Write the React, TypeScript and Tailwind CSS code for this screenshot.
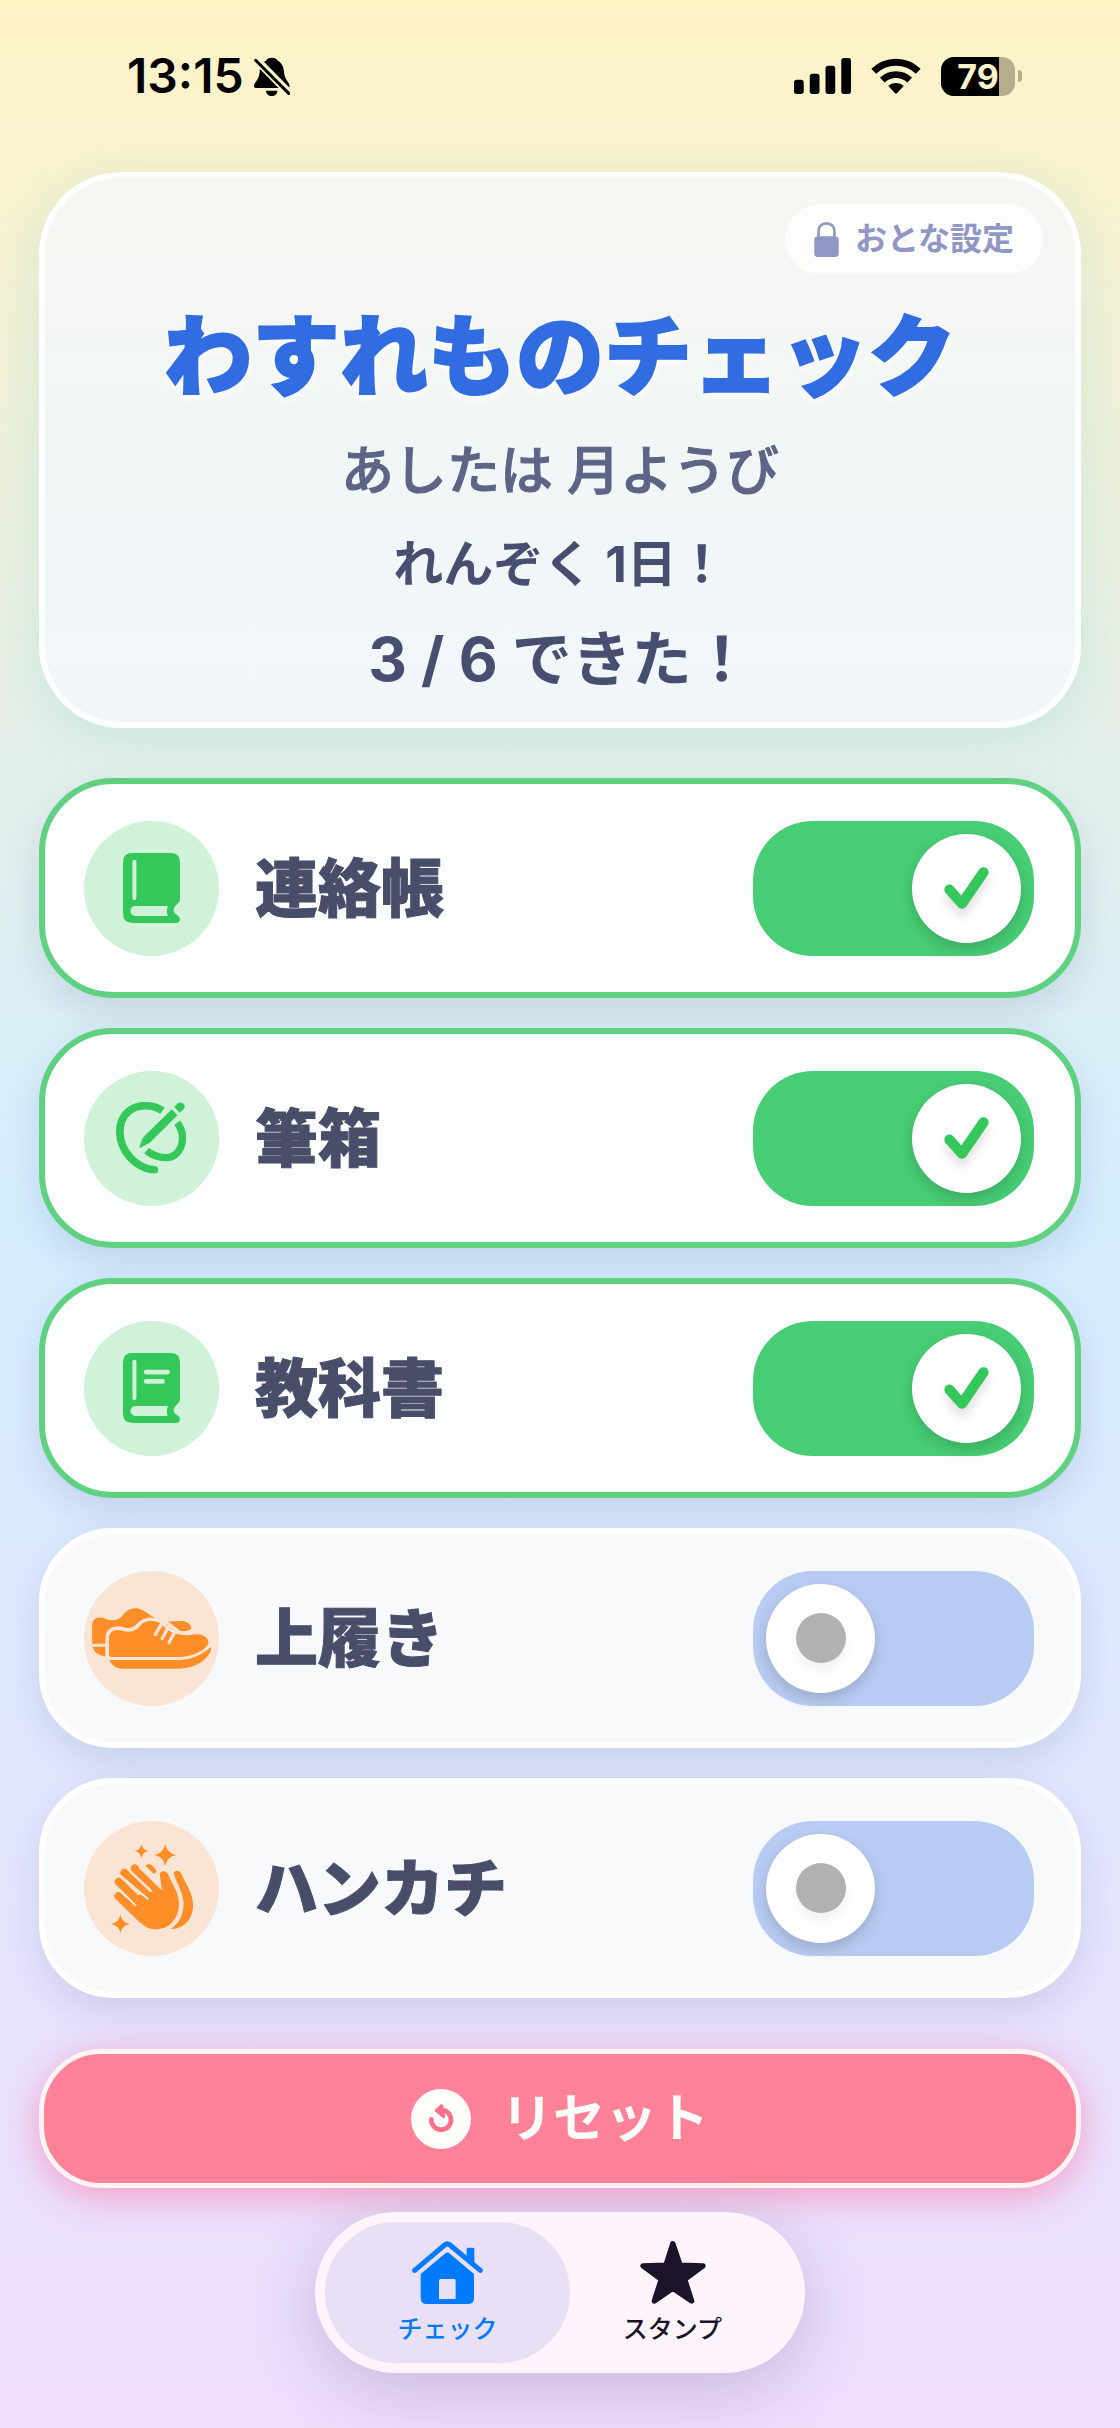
import { useState } from "react";
import type { ReactNode } from "react";

type Item = {
  id: string;
  name: string;
  icon: ReactNode;
  checked: boolean;
};

const TOTAL = 6;

function BellOffIcon() {
  return (
    <svg viewBox="0 0 112 118" className="h-[39px] w-[37px]" aria-hidden="true">
      <path
        d="M57 2C66 2 72 6 75 11C87 17 93 30 94 46C95 68 111 76 111 88C111 92 109 94 105 94H9C5 94 3 92 3 88C3 77 19 68 20 46C21 30 27 17 39 11C42 6 48 2 57 2Z"
        fill="black"
      />
      <path d="M39 102H74C73 112 66 118 57 118C47 118 40 112 39 102Z" fill="black" />
      <path d="M2 0L112 112" stroke="#FBF2C9" strokeWidth="24" />
      <path d="M8 10L108 110" stroke="black" strokeWidth="9" strokeLinecap="round" />
    </svg>
  );
}

function SignalIcon() {
  return (
    <svg viewBox="0 0 170 107" className="h-9 w-[57px]" aria-hidden="true">
      <rect x="0" y="65" width="29" height="42" rx="8" />
      <rect x="47" y="47" width="29" height="60" rx="8" />
      <rect x="94" y="23" width="29" height="84" rx="8" />
      <rect x="141" y="0" width="29" height="107" rx="8" />
    </svg>
  );
}

function WifiIcon() {
  return (
    <svg viewBox="0 0 149 109" fill="none" className="h-9 w-[50px]" aria-hidden="true">
      <path d="M7 40A97 97 0 0 1 142 40" stroke="black" strokeWidth="21" />
      <path d="M33 67A60 60 0 0 1 116 67" stroke="black" strokeWidth="20" />
      <path d="M51 85C63 73 86 73 98 85L78 106Q74.500 110 71 106Z" fill="black" />
    </svg>
  );
}

function Battery() {
  return (
    <div className="flex items-center gap-[3px]">
      <div className="relative h-[39px] w-[74px]">
        <div className="flex size-full overflow-hidden rounded-[13px] bg-[#B5AD8C]">
          <div className="w-[79%] bg-black" />
        </div>
        <span className="absolute inset-0 text-center text-[34px] leading-[39px] font-bold text-[#FBF3CB]">
          79
        </span>
      </div>
      <div className="h-3 w-1 rounded-r-full bg-[#B5AD8C]" />
    </div>
  );
}

function LockIcon() {
  return (
    <svg viewBox="0 0 74 106" fill="none" className="h-[35px] w-[25px]" aria-hidden="true">
      <path d="M13 50V29C13 13 23 4 37 4S61 13 61 29V50" stroke="#9097C4" strokeWidth="8" />
      <rect y="43" width="74" height="63" rx="11" fill="#9097C4" />
    </svg>
  );
}

function BookIcon({ lines = false }: { lines?: boolean }) {
  return (
    <svg viewBox="0 0 170 209" fill="none" className="h-[70px] w-[57px]" aria-hidden="true">
      <path
        d="M28 0H142Q170 0 170 28V140C170 150 151 156 151 172C151 183 170 187 170 198Q170 209 158 209H28Q0 209 0 181V28Q0 0 28 0Z"
        fill="#34C759"
      />
      <path d="M37 158H134C130 167 130 179 134 188H37A15 15 0 0 1 37 158Z" fill="#CFF2D8" />
      <path d="M34 26V134" stroke="#CFF2D8" strokeWidth="12" strokeLinecap="round" />
      {lines && (
        <path
          d="M69 57H133M69 85H118"
          stroke="#CFF2D8"
          strokeWidth="14"
          strokeLinecap="round"
        />
      )}
    </svg>
  );
}

function PencilLoopIcon() {
  return (
    <svg viewBox="0 0 212 216" fill="none" className="h-[72px] w-[71px]" aria-hidden="true">
      <path
        d="M139 26C124 16 106 11 87 11C40 11 11 45 11 89C11 146 57 196 110 203"
        stroke="#34C759"
        strokeWidth="23"
      />
      <circle cx="115" cy="203" r="11" fill="#34C759" />
      <path
        d="M183 62C193 75 199 92 199 108C199 145 175 167 150 167C128 167 108 160 91 146"
        stroke="#34C759"
        strokeWidth="22"
      />
      <path d="M142 36L162 16L194 48L174 68Z" fill="#CFF2D8" />
      <path
        d="M167 22L184 40L104 119Q100 123 94 126L73 137Q69 138 70 133L79 110Q81 105 85 102Z"
        fill="#34C759"
      />
      <path d="M174 15L185 4C196 -4 212 9 203 21L191 32Z" fill="#34C759" />
    </svg>
  );
}

function ShoesIcon() {
  return (
    <svg viewBox="0 0 362 184" fill="none" className="h-[61px] w-[121px]" aria-hidden="true">
      <path
        d="M2 108V50C3 32 22 25 38 31C58 39 78 40 92 25C106 6 122 -2 143 2C160 7 180 25 200 35L230 41L275 39C290 41 303 52 301 64L270 74L60 108Z"
        fill="#FF8D28"
      />
      <path d="M4 117H60V146H42C20 143 6 132 4 117Z" fill="#FF8D28" />
      <path
        d="M53 148V90C53 70 72 62 90 68C112 75 130 73 146 54C162 36 186 37 204 44L226 50L262 78C280 85 296 81 312 79C338 77 355 92 353 107C343 128 305 147 262 148Z"
        fill="#FF8D28"
        stroke="#FAE4D3"
        strokeWidth="22"
        strokeLinejoin="round"
        paintOrder="stroke"
      />
      <path d="M42 146H58V170H42Z" fill="#FAE4D3" />
      <path
        d="M54 157H268C306 157 342 134 361 118C362 145 324 181 268 183H92C70 182 59 170 54 157Z"
        fill="#FF8D28"
      />
      <path
        d="M212 47L192 80M232 58L213 92M252 70L234 104"
        stroke="#FAE4D3"
        strokeWidth="10"
        strokeLinecap="round"
      />
      <path d="M216 48C232 66 252 78 284 75" stroke="#FAE4D3" strokeWidth="9" strokeLinecap="round" />
    </svg>
  );
}

function HandsIcon() {
  return (
    <svg viewBox="0 0 245 266" fill="none" className="h-[89px] w-[82px]" aria-hidden="true">
      <g fill="#FF8D28">
        <path d="M91 0Q94 18 112 21Q94 24 91 42Q88 24 70 21Q88 18 91 0Z" />
        <path d="M162 0Q167 28 195 33Q167 38 162 66Q157 38 129 33Q157 28 162 0Z" />
        <path d="M28 211Q32 235 56 239Q32 243 28 267Q24 243 0 239Q24 235 28 211Z" />
        <path d="M103 66C108 59 120 59 126 67L135 78Q137 84 129 90Z" />
        <path d="M188 90C185 79 203 76 210 88C224 122 245 146 245 183C245 228 213 256 178 254C204 238 217 211 217 177C216 145 196 118 188 90Z" />
        <path d="M40 165L150 135L146 88C149 79 165 79 170 90C182 119 203 145 203 178C203 224 174 255 133 255C108 255 96 244 80 226L20 164Z" />
      </g>
      <path
        d="M22 156L92 224M23 113L105 193M40 86L130 174M71 73L150 150"
        stroke="#FF8D28"
        strokeWidth="24"
        strokeLinecap="round"
      />
      <path
        d="M28 138L73 183M32 98L110 164M57 82L116 135M86 70L150 133"
        stroke="#FAE4D3"
        strokeWidth="6"
        strokeLinecap="round"
      />
      <path d="M133 106L144 90L152 136Z" fill="#FAE4D3" />
    </svg>
  );
}

function CheckMark() {
  return (
    <svg
      viewBox="0 0 136 128"
      fill="none"
      className="h-[42px] w-[45px] drop-shadow-[0_8px_5px_rgba(0,0,0,0.12)]"
      aria-hidden="true"
    >
      <path
        d="M16 69L54 112L120 16"
        stroke="#34C759"
        strokeWidth="31"
        strokeLinecap="round"
        strokeLinejoin="round"
      />
    </svg>
  );
}

function ResetIcon() {
  return (
    <svg viewBox="0 0 180 180" fill="none" className="size-[60px]" aria-hidden="true">
      <circle cx="90" cy="90" r="90" fill="#FFFDFA" />
      <path
        d="M61 91A29.500 29.500 0 1 0 98 64"
        stroke="#FF6F8B"
        strokeWidth="14"
        strokeLinecap="round"
      />
      <path
        d="M92 50L76 65L98 83Z"
        fill="#FF6F8B"
        stroke="#FF6F8B"
        strokeWidth="9"
        strokeLinejoin="round"
      />
    </svg>
  );
}

function HouseIcon() {
  return (
    <svg viewBox="0 0 213 189" fill="none" className="h-[63px] w-[71px]" aria-hidden="true">
      <path d="M164 25Q164 20 169 20H182Q187 20 187 25V74L164 55Z" fill="#007AFF" />
      <path
        d="M8 88L98 12Q106 5 114 12L205 88"
        stroke="#007AFF"
        strokeWidth="15"
        strokeLinecap="round"
      />
      <path
        d="M26 99L100 37Q106 32 112 37L186 99V170Q186 189 167 189H45Q26 189 26 170ZM86 114Q81 114 81 119V174H131V119Q131 114 126 114Z"
        fill="#007AFF"
        fillRule="evenodd"
      />
    </svg>
  );
}

function StarIcon() {
  return (
    <svg viewBox="0 0 197 190" className="h-[63px] w-[66px]" aria-hidden="true">
      <path
        d="M98 8L120 73L189 75L134 116L155 181L98 143L42 181L63 116L8 75L77 73Z"
        fill="#1B1429"
        stroke="#1B1429"
        strokeWidth="16"
        strokeLinejoin="round"
      />
    </svg>
  );
}

const initialItems: Item[] = [
  { id: "renrakucho", name: "連絡帳", icon: <BookIcon />, checked: true },
  { id: "fudebako", name: "筆箱", icon: <PencilLoopIcon />, checked: true },
  { id: "kyokasho", name: "教科書", icon: <BookIcon lines />, checked: true },
  { id: "uwabaki", name: "上履き", icon: <ShoesIcon />, checked: false },
  { id: "hankachi", name: "ハンカチ", icon: <HandsIcon />, checked: false },
];

function StatusBar() {
  return (
    <div className="flex h-[152px] items-center justify-between pr-[98px] pl-[127px]">
      <div className="flex items-center gap-[9px]">
        <span className="text-[48px] leading-none font-semibold text-black">13:15</span>
        <BellOffIcon />
      </div>
      <div className="flex items-center gap-5">
        <SignalIcon />
        <WifiIcon />
        <Battery />
      </div>
    </div>
  );
}

function ItemRow({ item, onToggle }: { item: Item; onToggle: () => void }) {
  return (
    <li
      className={
        item.checked
          ? "flex h-[220px] items-center rounded-[74px] border-[6px] border-[#60D081] bg-[#FCFDFD] pr-[41px] pl-[39px] shadow-[0_14px_36px_rgba(60,70,110,0.14)]"
          : "flex h-[220px] items-center rounded-[74px] border-[6px] border-white bg-[#F8F9FB] pr-[41px] pl-[39px] shadow-[0_14px_36px_rgba(60,70,110,0.14)]"
      }
    >
      <div
        className={
          item.checked
            ? "flex size-[135px] shrink-0 items-center justify-center rounded-full bg-[#CFF2D8]"
            : "flex size-[135px] shrink-0 items-center justify-center rounded-full bg-[#FAE4D3]"
        }
      >
        {item.icon}
      </div>
      <label
        htmlFor={item.id}
        className="ml-9 grow text-[63px] leading-[76px] font-black text-[#484E6A] [-webkit-text-stroke:1px_#484E6A]"
      >
        {item.name}
      </label>
      <div className="relative">
        <input
          id={item.id}
          type="checkbox"
          checked={item.checked}
          onChange={onToggle}
          className="block h-[135px] w-[281px] cursor-pointer appearance-none rounded-[60px] bg-[#B8CBF2] checked:bg-[#47CD74]"
        />
        <div
          className={
            item.checked
              ? "pointer-events-none absolute top-[13px] right-[13px] flex size-[109px] items-center justify-center rounded-full bg-white shadow-[0_6px_14px_rgba(0,0,0,0.16)]"
              : "pointer-events-none absolute top-[13px] left-[13px] flex size-[109px] items-center justify-center rounded-full bg-white shadow-[0_6px_14px_rgba(0,0,0,0.16)]"
          }
        >
          {item.checked ? (
            <CheckMark />
          ) : (
            <span className="size-[50px] rounded-full bg-[#B1B1B3] shadow-[0_8px_12px_rgba(0,0,0,0.05)]" />
          )}
        </div>
      </div>
    </li>
  );
}

export default function App() {
  const [items, setItems] = useState(initialItems);
  const done = items.filter((item) => item.checked).length;

  const toggle = (id: string) =>
    setItems(items.map((item) => (item.id === id ? { ...item, checked: !item.checked } : item)));

  const reset = () => setItems(items.map((item) => ({ ...item, checked: false })));

  return (
    <div
      lang="ja"
      className="flex min-h-screen flex-col bg-linear-to-b from-[#FFF3C6] via-[#D4EEFF] to-[#F0DEFF] pb-[53px] font-['Inter','Noto_Sans_CJK_JP',sans-serif]"
    >
      <StatusBar />

      <main className="mx-[39px] mt-5">
        <header className="flex flex-col items-center rounded-[82px] border-[6px] border-white/90 bg-linear-to-b from-[#F6F7F1] via-[#F1F7F6] to-[#F1F6FB] bg-origin-border px-8 pt-[26px] pb-7 text-center shadow-[0_10px_50px_rgba(90,190,190,0.22)]">
          <button
            type="button"
            className="flex h-[70px] cursor-pointer items-center gap-4 self-end rounded-full bg-white/75 px-[29px] text-[32px] font-bold text-[#9097C4]"
          >
            <LockIcon />
            おとな設定
          </button>
          <h1 className="mt-8 text-[88px] leading-[100px] font-black text-[#316CE1] [text-shadow:0_4px_8px_white] [-webkit-text-stroke:2px_#316CE1]">
            わすれものチェック
          </h1>
          <p className="mt-8 text-[53px] leading-[66px] font-medium text-[#5D6485] [-webkit-text-stroke:1px_#5D6485]">
            あしたは 月ようび
          </p>
          <p className="mt-[30px] text-[50px] leading-[60px] font-bold text-[#474E6F]">
            れんぞく 1日！
          </p>
          <p className="mt-[30px] text-[60px] leading-[70px] font-bold text-[#474E6F]">
            {done} / {TOTAL} できた！
          </p>
        </header>

        <ul className="mt-[50px] flex flex-col gap-[30px]">
          {items.map((item) => (
            <ItemRow key={item.id} item={item} onToggle={() => toggle(item.id)} />
          ))}
        </ul>

        <button
          type="button"
          onClick={reset}
          className="mt-[51px] flex h-[139px] w-full cursor-pointer items-center justify-center gap-[30px] rounded-[62px] border-[5px] border-[#FFF3F3] bg-[#FF8298] text-[52px] font-bold text-[#FFFDFA] shadow-[0_8px_36px_rgba(255,90,140,0.5)]"
        >
          <ResetIcon />
          リセット
        </button>
      </main>

      <nav className="mt-6 flex self-center rounded-full bg-[#FDF4FE] p-[10px] shadow-[0_16px_70px_rgba(60,40,80,0.22)]">
        <a
          href="#check"
          aria-current="page"
          className="flex h-[141px] w-[245px] flex-col items-center justify-center gap-2 rounded-full bg-[#E9E0F6] pt-[2px] text-[25px] leading-[34px] font-medium text-[#007AFF]"
        >
          <HouseIcon />
          チェック
        </a>
        <a
          href="#stamp"
          className="-ml-5 flex h-[141px] w-[245px] flex-col items-center justify-center gap-2 rounded-full pt-[2px] text-[25px] leading-[34px] font-medium text-[#1B1429]"
        >
          <StarIcon />
          スタンプ
        </a>
      </nav>
    </div>
  );
}
